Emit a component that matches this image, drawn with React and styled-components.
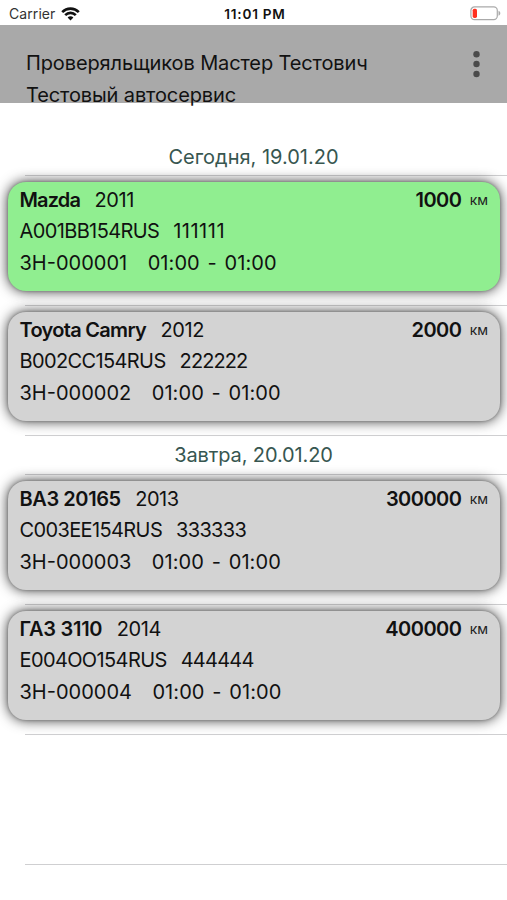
import React from "react";
import styled, { createGlobalStyle } from "styled-components";

const GlobalStyle = createGlobalStyle`
  * { box-sizing: border-box; }
  body { margin: 0; background: #fff; }
`;

const Screen = styled.div`
  width: 507px;
  height: 900px;
  overflow: hidden;
  background: #fff;
  color: #111;
  font-family: Inter, "Liberation Sans", sans-serif;
  font-size: 20px;
  display: flex;
  flex-direction: column;
`;

const StatusBar = styled.div`
  flex: none;
  height: 25.4px;
  display: grid;
  grid-template-columns: 1fr auto 1fr;
  align-items: center;
  padding: 2px 6px 0 9px;
  font-size: 14px;
  line-height: 20px;
`;

const Carrier = styled.div`
  display: flex;
  align-items: center;
  gap: 6px;
  color: #333;
  letter-spacing: 0.08px;
`;

const Clock = styled.div`
  font-size: 13.6px;
  font-weight: 600;
  letter-spacing: 0.75px;
`;

const Battery = styled.svg`
  justify-self: end;
`;

const Header = styled.header`
  flex: none;
  height: 78px;
  background: #a9a9a9;
  display: flex;
  justify-content: space-between;
  padding: 21.6px 26px 0 26px;
`;

const HeaderText = styled.div`
  display: flex;
  flex-direction: column;
  line-height: 32px;
  white-space: nowrap;
  letter-spacing: -0.12px;
`;

const MenuDots = styled.svg`
  margin-top: 3px;
`;

const List = styled.main`
  flex: none;
  padding-top: 33.6px;
`;

const rule = `
  background-image: linear-gradient(#cfcfd1, #cfcfd1);
  background-size: calc(100% - 25px) 1px;
  background-position: right bottom;
  background-repeat: no-repeat;
`;

const DayTitle = styled.h2`
  margin: 0;
  height: 38.8px;
  line-height: ${(p) => p.$lead || 40}px;
  font-size: 20px;
  font-weight: 400;
  text-align: center;
  color: #375650;
  letter-spacing: ${(p) => p.$track || 0}px;
  ${rule}
`;

const Row = styled.div`
  height: 130.1px;
  padding: 6.4px 7px 0 8px;
  ${rule}
`;

const Card = styled.article`
  height: 108.6px;
  border-radius: 18px;
  background: ${(p) => (p.$active ? "#90ee90" : "#d3d3d3")};
  box-shadow: 0 0 3px rgba(0, 0, 0, 0.25), 0 0 13px rgba(0, 0, 0, 0.8);
  padding: 2px 12px 0 11.5px;
  display: flex;
  flex-direction: column;
`;

const CardLine = styled.div`
  display: flex;
  align-items: center;
  height: ${(p) => p.$h || 31}px;
  white-space: nowrap;
`;

const Model = styled.strong`
  font-weight: 600;
  margin-right: 14.5px;
  letter-spacing: ${(p) => p.$track || 0}px;
`;

const Year = styled.span`
  letter-spacing: -0.45px;
`;

const Mileage = styled.strong`
  margin-left: auto;
  font-weight: 600;
  letter-spacing: -0.55px;
`;

const Unit = styled.span`
  font-size: 14px;
  letter-spacing: -0.1px;
  margin-left: 8.5px;
  color: #222;
`;

const Plate = styled.span`
  margin-right: 14px;
  letter-spacing: -0.62px;
`;

const Code = styled.span`
  letter-spacing: ${(p) => p.$track || 0}px;
`;

const Order = styled.span`
  margin-right: 20.5px;
`;

const Time = styled.span`
  letter-spacing: 0.08px;
  word-spacing: 2px;
`;

const Empty = styled.div`
  height: 130.1px;
  ${rule}
`;

const days = [
  {
    title: "Сегодня, 19.01.20",
    track: 0,
    lead: 40,
    cars: [
      { model: "Mazda", modelTrack: -0.85, year: "2011", km: "1000", plate: "A001BB154RUS", code: "111111", codeTrack: 0.5, order: "ЗН-000001", active: true },
      { model: "Toyota Camry", modelTrack: -0.7, year: "2012", km: "2000", plate: "B002CC154RUS", code: "222222", codeTrack: -0.9, order: "ЗН-000002" },
    ],
  },
  {
    title: "Завтра, 20.01.20",
    track: -0.12,
    lead: 38.8,
    cars: [
      { model: "ВАЗ 20165", modelTrack: -0.42, year: "2013", km: "300000", plate: "C003EE154RUS", code: "333333", codeTrack: -0.7, order: "ЗН-000003" },
      { model: "ГАЗ 3110", modelTrack: -0.28, year: "2014", km: "400000", plate: "E004OO154RUS", code: "444444", codeTrack: -0.75, order: "ЗН-000004" },
    ],
  },
];

function CarRow({ car }) {
  return (
    <Row>
      <Card $active={car.active}>
        <CardLine>
          <Model $track={car.modelTrack}>{car.model}</Model>
          <Year>{car.year}</Year>
          <Mileage>{car.km}</Mileage>
          <Unit>км</Unit>
        </CardLine>
        <CardLine>
          <Plate>{car.plate}</Plate>
          <Code $track={car.codeTrack}>{car.code}</Code>
        </CardLine>
        <CardLine $h={33}>
          <Order>{car.order}</Order>
          <Time>01:00 - 01:00</Time>
        </CardLine>
      </Card>
    </Row>
  );
}

export default function App() {
  return (
    <Screen>
      <GlobalStyle />
      <StatusBar>
        <Carrier>
          <span>Carrier</span>
          <svg width="19" height="14" viewBox="0 0 19 14" fill="none" stroke="#111" strokeWidth="2.6">
            <path d="M1.2 5.1C5.8.5 13.2.5 17.8 5.1" />
            <path d="M4.2 8.1c3-3 7.6-3 10.6 0" />
            <path d="M6.6 10.5c1.6-1.6 4.2-1.6 5.8 0L9.5 13.4z" fill="#111" stroke="none" />
          </svg>
        </Carrier>
        <Clock>11:01 PM</Clock>
        <Battery width="31" height="15" viewBox="0 0 31 15">
          <rect x="0.9" y="0.9" width="26.4" height="12.8" rx="3.6" fill="none" stroke="#aaa" strokeWidth="1.2" />
          <rect x="2.7" y="2.7" width="4.3" height="9.2" rx="1.6" fill="#ff3020" />
          <path d="M28.5 4.8c2.4 1 2.4 4 0 5z" fill="#aaa" />
        </Battery>
      </StatusBar>
      <Header>
        <HeaderText>
          <span>Проверяльщиков Мастер Тестович</span>
          <span>Тестовый автосервис</span>
        </HeaderText>
        <MenuDots width="9" height="28" viewBox="0 0 9 28" fill="#4b4b4b">
          <circle cx="4.5" cy="4.3" r="3.2" />
          <circle cx="4.5" cy="14" r="3.2" />
          <circle cx="4.5" cy="24" r="3.2" />
        </MenuDots>
      </Header>
      <List>
        {days.map((day) => (
          <section key={day.title}>
            <DayTitle $track={day.track} $lead={day.lead}>{day.title}</DayTitle>
            {day.cars.map((car) => (
              <CarRow key={car.order} car={car} />
            ))}
          </section>
        ))}
        <Empty />
      </List>
    </Screen>
  );
}
